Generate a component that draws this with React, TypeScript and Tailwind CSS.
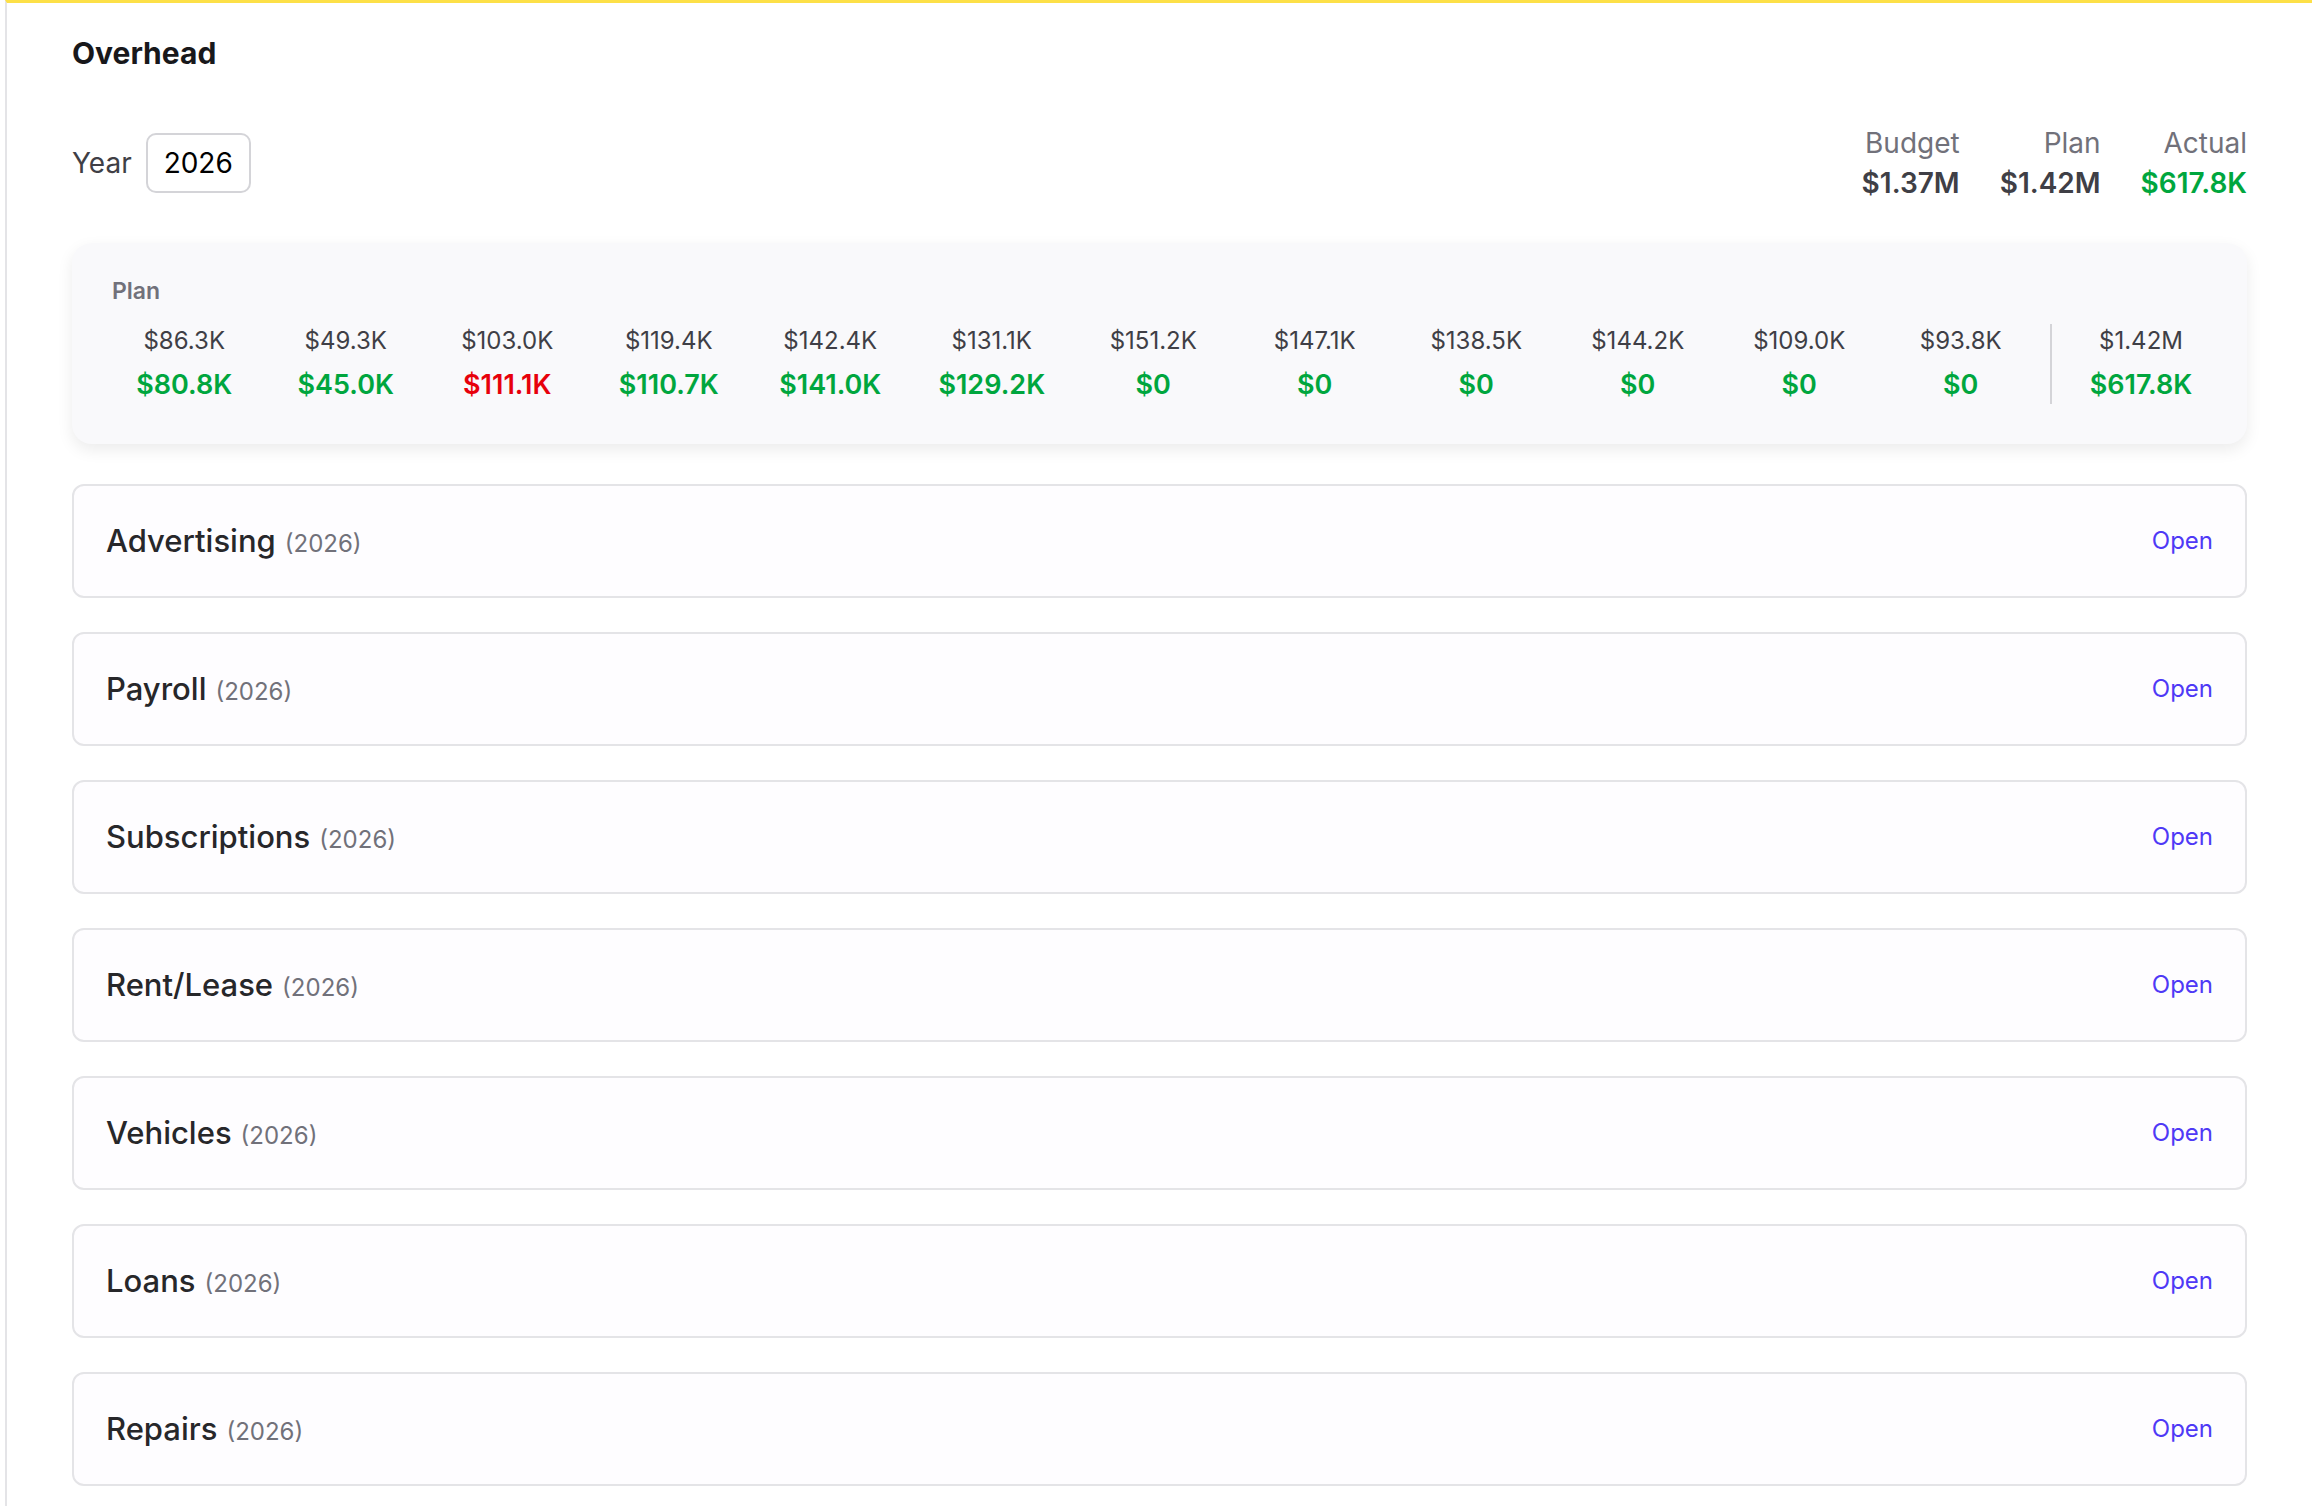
import React from "react";

interface MonthFigure {
  plan: string;
  actual: string;
  over?: boolean;
}

const months: MonthFigure[] = [
  { plan: "$86.3K", actual: "$80.8K" },
  { plan: "$49.3K", actual: "$45.0K" },
  { plan: "$103.0K", actual: "$111.1K", over: true },
  { plan: "$119.4K", actual: "$110.7K" },
  { plan: "$142.4K", actual: "$141.0K" },
  { plan: "$131.1K", actual: "$129.2K" },
  { plan: "$151.2K", actual: "$0" },
  { plan: "$147.1K", actual: "$0" },
  { plan: "$138.5K", actual: "$0" },
  { plan: "$144.2K", actual: "$0" },
  { plan: "$109.0K", actual: "$0" },
  { plan: "$93.8K", actual: "$0" },
];

const categories = [
  "Advertising",
  "Payroll",
  "Subscriptions",
  "Rent/Lease",
  "Vehicles",
  "Loans",
  "Repairs",
];

const Summary = ({ label, value, green }: { label: string; value: string; green?: boolean }) => (
  <div className="flex flex-col items-end">
    <span className="text-[28px] leading-[40px] text-[#71717a]">{label}</span>
    <span className={`text-[28px] leading-[40px] font-semibold ${green ? "text-green-600" : "text-[#3f3f46]"}`}>
      {value}
    </span>
  </div>
);

export default function App() {
  return (
    <div className="min-h-screen bg-white pl-[5px] font-['Inter','Noto_Sans',sans-serif]">
      <div className="min-h-screen border-l-2 border-l-[#e4e4e7] border-t-[3px] border-t-[#fde047] px-[65px] pt-[32px] pb-10">
        <h1 className="text-[30px] leading-[36px] font-bold text-[#18181b]">Overhead</h1>

        {/* Year + totals */}
        <div className="mt-[52px] flex items-center justify-between">
          <div className="flex items-center gap-[14px]">
            <span className="text-[28px] text-[#3f3f46]">Year</span>
            <div className="flex h-[60px] w-[105px] items-center justify-center rounded-[10px] border-2 border-[#d4d4d8] bg-white text-[28px] text-black">
              2026
            </div>
          </div>
          <div className="flex gap-[40px]">
            <Summary label="Budget" value="$1.37M" />
            <Summary label="Plan" value="$1.42M" />
            <Summary label="Actual" value="$617.8K" green />
          </div>
        </div>

        {/* Monthly plan strip */}
        <div className="mt-[40px] rounded-[20px] bg-[#f9f9fb] px-[40px] pt-[33px] pb-[40px] shadow-[0_6px_16px_rgba(0,0,0,0.08)]">
          <div className="text-[23px] leading-[30px] font-semibold text-[#71717a]">Plan</div>
          <div className="mt-[18px] flex items-center">
            <div className="grid flex-1 grid-cols-12 gap-x-[17px]">
              {months.map((m, i) => (
                <div key={i} className="flex flex-col items-center">
                  <span className="text-[24px] leading-[32px] text-[#3f3f46]">{m.plan}</span>
                  <span
                    className={`mt-[10px] text-[27px] leading-[36px] font-semibold ${
                      m.over ? "text-red-600" : "text-green-600"
                    }`}
                  >
                    {m.actual}
                  </span>
                </div>
              ))}
            </div>
            <div className="ml-[17px] mr-[23px] h-[80px] w-[2px] bg-[#d4d4d8]" />
            <div className="flex w-[132px] flex-col items-center">
              <span className="text-[24px] leading-[32px] text-[#3f3f46]">$1.42M</span>
              <span className="mt-[10px] text-[27px] leading-[36px] font-semibold text-green-600">$617.8K</span>
            </div>
          </div>
        </div>

        {/* Category sections */}
        <div className="mt-[40px] flex flex-col gap-[34px]">
          {categories.map((c) => (
            <div
              key={c}
              className="flex h-[114px] items-center justify-between rounded-[12px] border-2 border-[#e4e4e7] bg-[#fefdff] px-[32px]"
            >
              <div className="flex items-baseline">
                <span className="text-[31px] font-medium text-[#27272a]">{c}</span>
                <span className="ml-[9px] text-[24px] text-[#71717a]">(2026)</span>
              </div>
              <button className="text-[24px] text-[#4f39f6]">Open</button>
            </div>
          ))}
        </div>
      </div>
    </div>
  );
}
